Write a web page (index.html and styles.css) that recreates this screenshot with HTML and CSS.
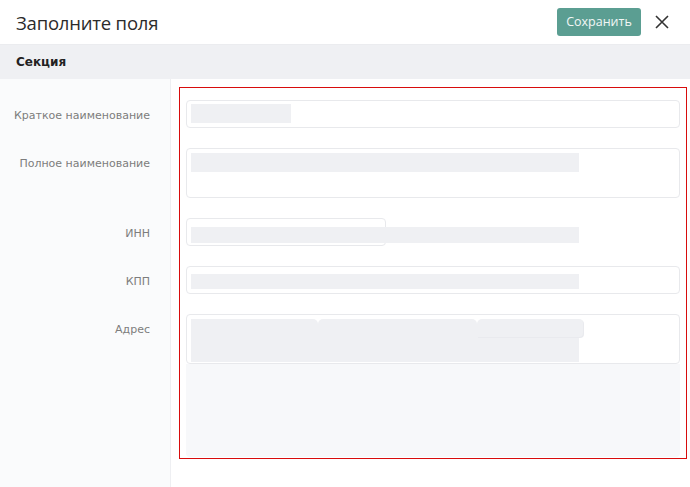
FILE: index.html
```html
<!DOCTYPE html>
<html lang="ru">
<head>
  <meta charset="UTF-8">
  <title>Заполните поля</title>
  <meta name="viewport" content="width=device-width, initial-scale=1.0">
  <link rel="stylesheet" href="styles.css">
</head>
<body>
  <div class="dialog">
    <header class="dialog-header">
      <h1 class="dialog-title">Заполните поля</h1>
      <div class="dialog-actions">
        <button type="button" class="save-btn">Сохранить</button>
        <button type="button" class="close-btn" aria-label="Закрыть">
          <svg width="16" height="16" viewBox="0 0 16 16">
            <path d="M2 2 L14 14 M14 2 L2 14" stroke="#333" stroke-width="1.6" fill="none"/>
          </svg>
        </button>
      </div>
    </header>

    <div class="section-bar">Секция</div>

    <div class="section-body">
      <aside class="labels">
        <div class="label-row">Краткое наименование</div>
        <div class="label-row tall">Полное наименование</div>
        <div class="label-row">ИНН</div>
        <div class="label-row">КПП</div>
        <div class="label-row tall">Адрес</div>
      </aside>

      <main class="fields">
        <div class="highlight">
          <div class="field">
            <span class="skeleton sk-short"></span>
          </div>
          <div class="field tall">
            <span class="skeleton sk-long sk-name"></span>
          </div>
          <div class="field narrow">
            <span class="skeleton sk-long sk-inn"></span>
          </div>
          <div class="field">
            <span class="skeleton sk-long sk-kpp"></span>
          </div>
          <div class="address-group">
            <div class="field tall">
              <div class="skeleton sk-address">
                <div class="chips">
                  <span class="chip chip-a"></span>
                  <span class="chip chip-b"></span>
                  <span class="chip chip-c"></span>
                </div>
              </div>
            </div>
            <div class="address-extra"></div>
          </div>
        </div>
      </main>
    </div>
  </div>
</body>
</html>
```

FILE: styles.css
```css
* {
  box-sizing: border-box;
}
body {
  margin: 0;
  background: #fff;
  font-family: "DejaVu Sans", Verdana, sans-serif;
  color: #333;
}
.dialog {
  width: 690px;
  height: 487px;
  display: flex;
  flex-direction: column;
}
.dialog-header {
  height: 45px;
  display: flex;
  align-items: center;
  justify-content: space-between;
  padding: 0 20px 0 16px;
  border-bottom: 1px solid #ebecef;
}
.dialog-title {
  margin: 0;
  font-family: "Open Sans", sans-serif;
  font-weight: 400;
  font-size: 18.5px;
  color: #2b2b2b;
  letter-spacing: -0.2px;
}
.dialog-actions {
  display: flex;
  align-items: center;
  gap: 13px;
}
.save-btn {
  height: 28px;
  width: 84px;
  margin-top: -1px;
  border: none;
  border-radius: 3px;
  background: #5b9e92;
  color: #f2f7f6;
  font-family: "Open Sans", sans-serif;
  font-size: 12.5px;
  cursor: pointer;
}
.close-btn {
  width: 16px;
  height: 16px;
  padding: 0;
  border: none;
  background: none;
  display: flex;
  cursor: pointer;
}
.section-bar {
  height: 34px;
  display: flex;
  align-items: center;
  padding-left: 16px;
  background: #eff0f3;
  font-weight: bold;
  font-size: 12px;
  color: #222;
}
.section-body {
  flex: 1;
  display: flex;
}
.labels {
  width: 171px;
  padding: 23px 20px 0 0;
  background: #fafbfc;
  border-right: 1px solid #eeeff2;
  display: flex;
  flex-direction: column;
  gap: 20px;
}
.label-row {
  height: 28px;
  line-height: 28px;
  text-align: right;
  font-size: 11px;
  color: #7d7d7d;
  white-space: nowrap;
}
.label-row.tall {
  height: 50px;
}
.fields {
  flex: 1;
  padding: 8px 3px 0 8px;
}
.highlight {
  border: 1px solid #d80c0c;
  padding: 12px 6px 1px 6px;
  display: flex;
  flex-direction: column;
  gap: 20px;
}
.field {
  position: relative;
  height: 28px;
  border: 1px solid #e8e9ec;
  border-radius: 4px;
  background: #fff;
}
.field.tall {
  height: 50px;
}
.field.narrow {
  width: 200px;
}
.skeleton {
  position: absolute;
  left: 4px;
  background: #eff0f3;
}
.sk-short {
  top: 3px;
  width: 100px;
  height: 19px;
}
.sk-long {
  width: 388px;
}
.sk-name {
  top: 4px;
  height: 19px;
}
.sk-inn {
  top: 8px;
  height: 16px;
}
.sk-kpp {
  top: 7px;
  height: 15px;
}
.sk-address {
  top: 4px;
  width: 388px;
  height: 43px;
  background: #eff0f3;
}
.chips {
  display: flex;
  width: 392px;
  background: #fff;
  border-radius: 4px 4px 0 0;
}
.chip {
  height: 18px;
  border-radius: 5px 5px 0 0;
  background: #eff0f3;
}
.chip-a {
  width: 127px;
  border-top-left-radius: 0;
}
.chip-b {
  width: 159px;
}
.chip-c {
  width: 106px;
  border-radius: 5px 4px 4px 0;
  box-shadow: 1px 1px 0 #e9eaee;
}
.address-group {
  display: flex;
  flex-direction: column;
}
.address-extra {
  height: 93px;
  background: #f7f8fa;
  border-radius: 0 0 4px 4px;
}
```
